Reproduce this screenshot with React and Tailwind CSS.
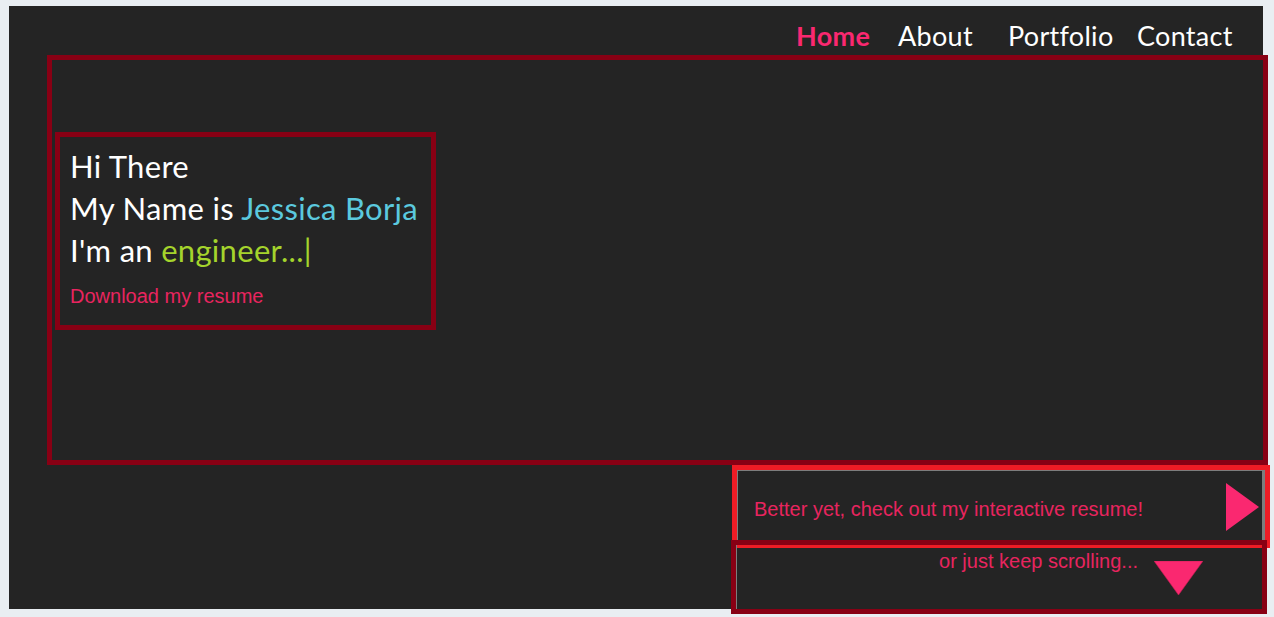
import React from 'react';

const NAV = [
  { label: 'Home', w: 'w-[102px]', active: true },
  { label: 'About', w: 'w-[110px]' },
  { label: 'Portfolio', w: 'w-[129px]' },
  { label: 'Contact', w: 'w-[126px]' },
];

function TriRight() {
  return (
    <svg width="33" height="48" viewBox="0 0 33 48" className="shrink-0">
      <polygon points="0,0 33,24 0,48" fill="#fa2870" />
    </svg>
  );
}

function TriDown() {
  return (
    <svg width="49" height="34" viewBox="0 0 49 34" className="shrink-0">
      <polygon points="0,0 49,0 24.5,34" fill="#fa2870" stroke="#c02050" strokeWidth="0.6" />
    </svg>
  );
}

export default function App() {
  return (
    <div className="min-h-[617px] bg-[#e9eef2] pt-[6px] pl-[9px] overflow-hidden">
      <div className="h-[603px] w-[1254px] bg-[#242424] font-['Lato',sans-serif]">
        {/* nav */}
        <nav className="flex h-[49px] items-center pl-[787px] pt-[10px] text-[27px] tracking-[0.3px] text-white">
          {NAV.map((n) => (
            <a
              key={n.label}
              className={`${n.w} ${n.active ? 'font-bold text-[#fa2870]' : 'font-normal'} leading-none`}
            >
              {n.label}
            </a>
          ))}
        </nav>

        {/* hero frame */}
        <div className="ml-[38px] h-[410px] w-[1221px] border-[5px] border-[#880014]">
          <div className="ml-[3px] mt-[72px] h-[198px] w-[381px] border-[5px] border-[#880014] px-[10px] pt-[8px]">
            <div className="text-[31px] leading-[42px] tracking-[0.3px] text-white">
              <p>Hi There</p>
              <p>
                My Name is <span className="text-[#5bc9de]">Jessica Borja</span>
              </p>
              <p>
                I'm an <span className="text-[#a5d42c]">engineer...</span>
                <span className="text-[#a5d42c]">|</span>
              </p>
            </div>
            <a className="mt-[14px] block font-['Liberation_Sans',Arial,sans-serif] text-[20px] leading-[22px] text-[#e8245f]">
              Download my resume
            </a>
          </div>
        </div>

        {/* call to action */}
        <div className="ml-[723px] h-[83px] w-[538px] border-[5px] border-[#ee1c25] font-['Liberation_Sans',Arial,sans-serif]">
          <div className="flex h-full items-center justify-between border-l border-r-[3px] border-t border-[#7d7d7d] pl-[16px] pr-[3px]">
            <span className="mt-[4px] text-[20px] leading-[22px] text-[#e8245f]">
              Better yet, check out my interactive resume!
            </span>
            <TriRight />
          </div>
        </div>
        <div className="relative -mt-[8px] ml-[722px] h-[74px] w-[536px] border-[5px] border-[#880014] font-['Liberation_Sans',Arial,sans-serif]">
          <div className="flex h-full items-start justify-end gap-[16px] border-l border-[#7d7d7d] pr-[59px]">
            <span className="mt-[5px] text-[20px] leading-[22px] text-[#e8245f]">or just keep scrolling...</span>
            <div className="mt-[16px]">
              <TriDown />
            </div>
          </div>
        </div>
      </div>
    </div>
  );
}
